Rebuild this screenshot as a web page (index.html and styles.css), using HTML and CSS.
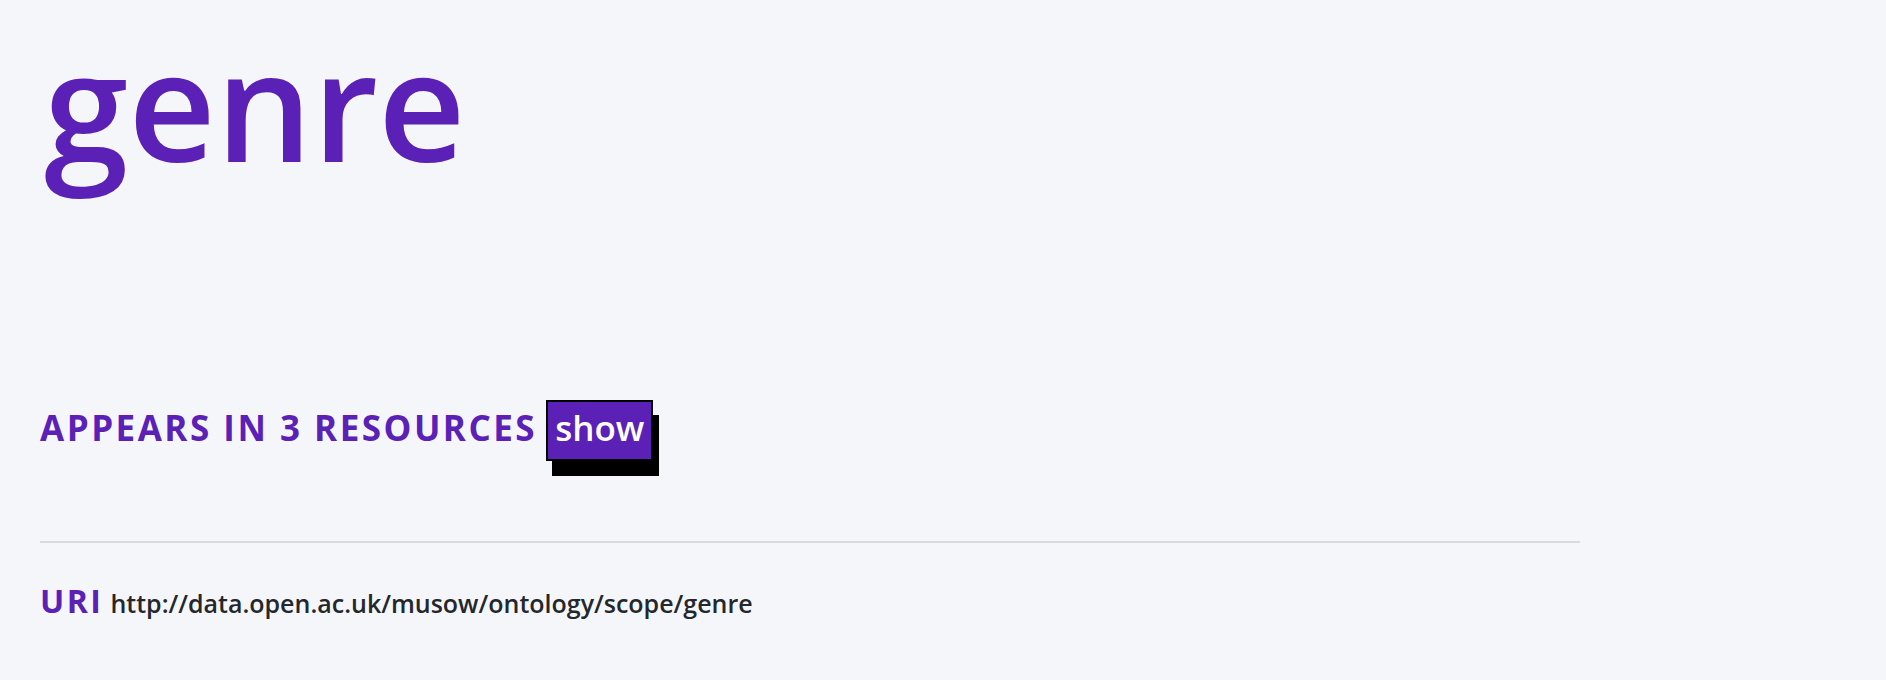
FILE: index.html
```html
<!DOCTYPE html>
<html lang="en">
<head>
<meta charset="utf-8">
<title>genre</title>
<link rel="stylesheet" href="styles.css">
</head>
<body>
<main class="page">
  <h1 class="title">genre</h1>
  <section class="appears">
    <h2 class="appears-heading">Appears in 3 resources</h2>
    <button class="show-btn" type="button">show</button>
  </section>
  <hr class="divider">
  <div class="uri">
    <span class="uri-label">URI</span>
    <span class="uri-value">http://data.open.ac.uk/musow/ontology/scope/genre</span>
  </div>
</main>
</body>
</html>
```

FILE: styles.css
```css
html, body {
  margin: 0;
  padding: 0;
}
body {
  background: #f5f6fa;
  font-family: "Open Sans", "Noto Sans", sans-serif;
  color: #1f2328;
}
.page {
  padding: 13px 40px 0 40px;
  width: 1540px;
}
.title {
  margin: 0 0 0 4px;
  font-size: 152px;
  line-height: 1.2;
  font-weight: 600;
  color: #5b21b6;
}
.appears {
  margin-top: 205px;
  display: flex;
  align-items: baseline;
  gap: 9px;
}
.appears-heading {
  margin: 0;
  font-size: 35px;
  line-height: 1.2;
  font-weight: 700;
  color: #5b21b6;
  text-transform: uppercase;
  letter-spacing: 2.5px;
}
.show-btn {
  font-family: inherit;
  font-size: 35px;
  line-height: 1.2;
  font-weight: 600;
  color: #ffffff;
  background: #5b21b6;
  border: 2px solid #000;
  padding: 5px 7px 10px 7px;
  box-shadow: 6px 15px 0 #000;
  cursor: pointer;
}
.divider {
  margin: 80px 0 0 0;
  border: 0;
  height: 2px;
  background: #d9dbe1;
}
.uri {
  margin-top: 39px;
  display: flex;
  align-items: baseline;
  gap: 7px;
}
.uri-label {
  font-size: 32px;
  line-height: 1.2;
  font-weight: 700;
  color: #5b21b6;
  letter-spacing: 2.5px;
}
.uri-value {
  font-size: 25px;
  line-height: 1.2;
  font-weight: 600;
  color: #24272b;
}
```
